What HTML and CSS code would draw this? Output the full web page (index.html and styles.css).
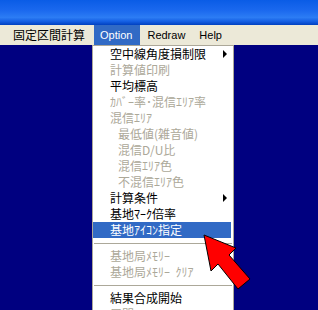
FILE: index.html
```html
<!DOCTYPE html>
<html>
<head>
  <meta charset="utf-8">
  <title>Option</title>
  <link rel="stylesheet" href="styles.css">
</head>
<body>
<div class="window">
  <div class="titlebar"></div>
  <div class="menubar">
    <span class="menubar-item first">固定区間計算</span>
    <span class="menubar-item open">Option</span>
    <span class="menubar-item">Redraw</span>
    <span class="menubar-item">Help</span>
  </div>
  <div class="client"></div>

  <!-- Option ドロップダウン -->
  <ul class="menu">
    <li class="item sub">空中線角度損制限</li>
    <li class="item off">計算値印刷</li>
    <li class="item">平均標高</li>
    <li class="item off">ｶﾊﾞｰ率･混信ｴﾘｱ率</li>
    <li class="item off">混信ｴﾘｱ</li>
    <li class="item off indent">最低値(雑音値)</li>
    <li class="item off indent">混信D/U比</li>
    <li class="item off indent">混信ｴﾘｱ色</li>
    <li class="item off indent">不混信ｴﾘｱ色</li>
    <li class="item sub">計算条件</li>
    <li class="item">基地ﾏｰｸ倍率</li>
    <li class="item active">基地ｱｲｺﾝ指定</li>
    <li class="sep"></li>
    <li class="item off">基地局ﾒﾓﾘｰ</li>
    <li class="item off">基地局ﾒﾓﾘｰ&nbsp;&nbsp;ｸﾘｱ</li>
    <li class="sep"></li>
    <li class="item">結果合成開始</li>
    <li class="item off">展開</li>
  </ul>

  <svg class="pointer" width="60" height="70" viewBox="0 0 60 70">
    <polygon points="4,4 11,40 18,33 38,58 50,48 29,24 36,17" fill="#ff0000" stroke="#000" stroke-width="1"/>
  </svg>
</div>
</body>
</html>
```

FILE: styles.css
```css
/* 画面全体 */
body {
  margin: 0;
  font-family: "Liberation Sans", "Noto Sans CJK JP", sans-serif;
}
.window {
  position: relative;
  width: 318px;
  height: 310px;
  display: flex;
  flex-direction: column;
  overflow: hidden;
  background: #000080;
}
.titlebar {
  height: 25px;
  flex: none;
  background: linear-gradient(#0a5ce6 0%, #1a68ee 40%, #2c7cf4 70%, #1560e4 85%, #0040c0 100%);
}
.menubar {
  height: 20px;
  flex: none;
  display: flex;
  align-items: center;
  background: #ece9d8;
  font-size: 11px;
  color: #000;
}
.menubar-item {
  height: 20px;
  line-height: 20px;
  padding: 0 7px;
}
.menubar-item.first {
  padding: 0 9px 0 13px;
  font-size: 12px;
  font-family: "Noto Sans CJK JP", sans-serif;
}
.menubar-item.open {
  background: #316ac5;
  color: #fff;
  padding: 0 8px 0 6px;
}
.client {
  flex: 1;
  background: #000080;
}

/* ドロップダウン */
.menu {
  position: absolute;
  left: 92px;
  top: 45px;
  width: 142px;
  box-sizing: border-box;
  margin: 0;
  padding: 0 2px 0 0;
  list-style: none;
  background: #fff;
  border: 1px solid #aca899;
  font-family: "Noto Sans CJK JP", sans-serif;
  font-size: 12px;
}
.item {
  position: relative;
  height: 16px;
  line-height: 16px;
  padding-left: 17px;
  color: #000;
  white-space: nowrap;
}
.item.off {
  color: #aca899;
}
.item.indent {
  padding-left: 25px;
}
.item.active {
  background: #316ac5;
  color: #fff;
}
.item.sub::after {
  content: "";
  position: absolute;
  right: 4px;
  top: 4px;
  border-left: 4px solid #000;
  border-top: 4px solid transparent;
  border-bottom: 4px solid transparent;
}
.sep {
  height: 10px;
  position: relative;
}
.sep::before {
  content: "";
  position: absolute;
  left: 1px;
  right: -1px;
  top: 5px;
  border-top: 1px solid #aca899;
}
.pointer {
  position: absolute;
  left: 200px;
  top: 231px;
}
```
